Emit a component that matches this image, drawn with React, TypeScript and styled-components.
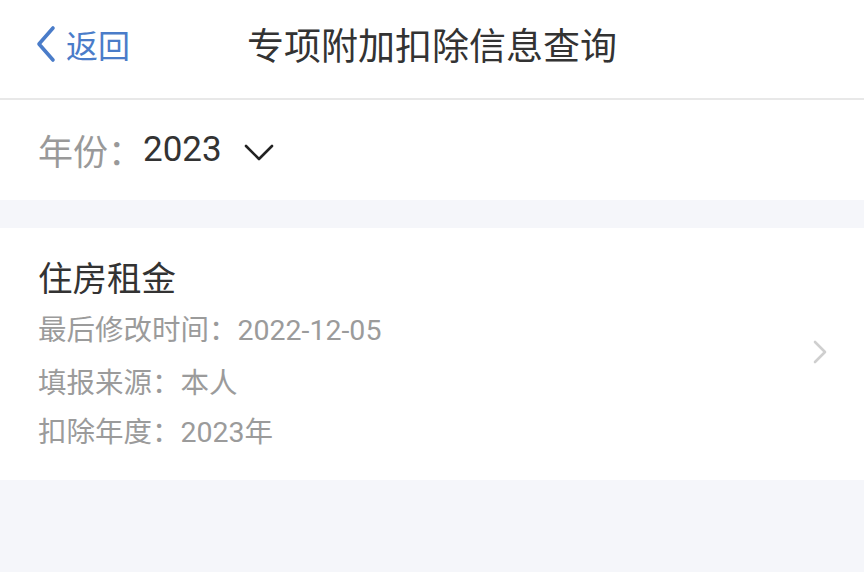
import React from 'react';
import styled, { createGlobalStyle } from 'styled-components';

const GlobalStyle = createGlobalStyle`
  html, body {
    margin: 0;
    padding: 0;
    background: #f5f6fa;
  }
  body {
    font-family: "Noto Sans CJK SC", Roboto, "Noto Sans", sans-serif;
  }
`

const Page = styled.div`
  width: 864px;
  height: 572px;
  background: #f5f6fa;
  overflow: hidden;
`

const Header = styled.div`
  height: 100px;
  box-sizing: border-box;
  padding-bottom: 10px;
  background: #fff;
  border-bottom: 2px solid #e8e8e8;
  display: grid;
  grid-template-columns: 216px 1fr 216px;
  align-items: center;
`

const Back = styled.div`
  display: flex;
  align-items: center;
  padding-left: 34px;
  color: #4a7cc9;
  font-size: 32px;
  gap: 8px;

  svg {
    width: 24px;
    height: 38px;
  }
`

const Title = styled.div`
  text-align: center;
  font-size: 37px;
  color: #333;
`

const YearRow = styled.div`
  height: 100px;
  background: #fff;
  display: flex;
  align-items: center;
  padding-left: 38px;
  font-size: 35px;
  margin-bottom: 28px;
`

const Label = styled.span`
  color: #999;
  margin-top: -2px;
`

const YearValue = styled.span`
  color: #333;
  font-family: Roboto, "Noto Sans CJK SC", sans-serif;
  margin-top: -2px;
`

const Caret = styled.svg`
  width: 30px;
  height: 18px;
  margin-left: 22px;
  margin-top: 4px;
`

const Card = styled.div`
  height: 252px;
  background: #fff;
  display: flex;
  align-items: center;
  padding: 0 36px 0 38px;
`

const CardBody = styled.div`
  flex: 1;
  display: flex;
  flex-direction: column;
  margin-top: 4px;
`

const CardTitle = styled.div`
  font-size: 34.5px;
  color: #333;
  line-height: 44px;
  margin-bottom: 5px;
`

const InfoLine = styled.div`
  font-size: 28.5px;
  color: #9b9b9b;
  line-height: 49.5px;

  span {
    font-family: Roboto, "Noto Sans CJK SC", sans-serif;
  }
`

const Arrow = styled.svg`
  width: 16px;
  height: 26px;
  margin-top: -4px;
`

function App() {
  return (
    <Page>
      <GlobalStyle />
      <Header>
        <Back>
          <svg viewBox="0 0 24 38">
            <polyline points="19,3 5,19 19,35" fill="none" stroke="#4a7cc9" strokeWidth="3.6" strokeLinecap="round" strokeLinejoin="round" />
          </svg>
          返回
        </Back>
        <Title>专项附加扣除信息查询</Title>
        <div />
      </Header>
      <YearRow>
        <Label>年份：</Label>
        <YearValue>2023</YearValue>
        <Caret viewBox="0 0 30 18">
          <polyline points="2,3 15,16 28,3" fill="none" stroke="#222" strokeWidth="2.6" strokeLinecap="round" strokeLinejoin="round" />
        </Caret>
      </YearRow>
      <Card>
        <CardBody>
          <CardTitle>住房租金</CardTitle>
          <InfoLine>最后修改时间：<span>2022-12-05</span></InfoLine>
          <InfoLine>填报来源：本人</InfoLine>
          <InfoLine>扣除年度：<span>2023</span>年</InfoLine>
        </CardBody>
        <Arrow viewBox="0 0 16 26">
          <polyline points="3,3 13,13 3,23" fill="none" stroke="#cfcfcf" strokeWidth="2.6" strokeLinecap="round" strokeLinejoin="round" />
        </Arrow>
      </Card>
    </Page>
  )
}

export default App;
